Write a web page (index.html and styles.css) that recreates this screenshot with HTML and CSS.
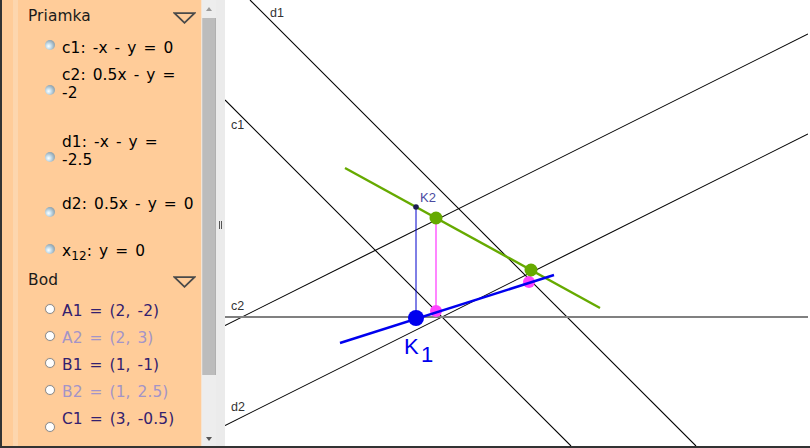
FILE: index.html
```html
<!DOCTYPE html>
<html>
<head>
<meta charset="utf-8">
<link rel="stylesheet" href="styles.css">
</head>
<body>
<div class="app">
  <div class="panel">
    <div class="header h-first"><span>Priamka</span><svg class="tri" width="23" height="12" viewBox="0 0 23 12"><path d="M1.5 1.2 H21.5 L11.5 10.8 Z" fill="none" stroke="#4a4a4a" stroke-width="1.8"/></svg></div>
    <div class="item g14"><span class="dot ln b-top1"></span><div class="txt">c1: -x - y = 0</div></div>
    <div class="item two g9"><span class="dot ln b-two"></span><div class="txt">c2: 0.5x - y =<br>-2</div></div>
    <div class="item two g31"><span class="dot ln b-two"></span><div class="txt">d1: -x - y =<br>-2.5</div></div>
    <div class="item g26"><span class="dot ln b-low"></span><div class="txt">d2: 0.5x - y = 0</div></div>
    <div class="item g29"><span class="dot ln"></span><div class="txt">x<sub>12</sub>: y = 0</div></div>
    <div class="header g11"><span>Bod</span><svg class="tri" width="23" height="12" viewBox="0 0 23 12"><path d="M1.5 1.2 H21.5 L11.5 10.8 Z" fill="none" stroke="#4a4a4a" stroke-width="1.8"/></svg></div>
    <div class="item g13 pt"><span class="dot pd"></span><div class="txt">A1 = (2, -2)</div></div>
    <div class="item g9 pt faded"><span class="dot pd"></span><div class="txt">A2 = (2, 3)</div></div>
    <div class="item g9 pt"><span class="dot pd"></span><div class="txt">B1 = (1, -1)</div></div>
    <div class="item g9 pt faded"><span class="dot pd"></span><div class="txt">B2 = (1, 2.5)</div></div>
    <div class="item g9 pt"><span class="dot pd b-low"></span><div class="txt">C1 = (3, -0.5)</div></div>
  </div>
  <div class="scrollbar">
    <span class="arrow up"></span>
    <div class="thumb"></div>
    <span class="arrow down"></span>
  </div>
  <div class="divider"><span class="grip"></span></div>
  <div class="graphics">
    <svg class="canvas" width="583" height="446" viewBox="225 0 583 446">
      <g stroke="#000" stroke-width="1.1" fill="none">
        <line x1="225" y1="100" x2="571" y2="446"/>
        <line x1="250" y1="0" x2="696" y2="446"/>
        <line x1="225" y1="325.5" x2="808" y2="34"/>
        <line x1="225" y1="425.5" x2="808" y2="134"/>
      </g>
      <line x1="225" y1="317" x2="808" y2="317" stroke="#808080" stroke-width="2"/>
      <line x1="345" y1="168" x2="600" y2="308" stroke="#66aa00" stroke-width="2.4"/>
      <circle cx="436" cy="311" r="6" fill="#ff44ff"/>
      <circle cx="529" cy="282" r="6" fill="#ff44ff"/>
      <line x1="436" y1="218" x2="436" y2="311" stroke="#ff44ff" stroke-width="1.3"/>
      <line x1="531" y1="270" x2="530" y2="282" stroke="#ff44ff" stroke-width="1.3"/>
      <line x1="340" y1="343" x2="554" y2="275" stroke="#0000ee" stroke-width="2.4"/>
      <line x1="416" y1="207" x2="416" y2="318" stroke="#0000cc" stroke-width="1"/>
      <circle cx="436" cy="218" r="6.5" fill="#66aa00"/>
      <circle cx="531" cy="270" r="6.5" fill="#66aa00"/>
      <circle cx="416" cy="318" r="8" fill="#0000ee"/>
      <circle cx="416" cy="207" r="2.8" fill="#1c1c50"/>
      <g class="lbl">
        <text x="270" y="17">d1</text>
        <text x="231" y="129">c1</text>
        <text x="231" y="310">c2</text>
        <text x="231" y="411">d2</text>
      </g>
      <text class="k2" x="420" y="202">K2</text>
      <text class="k1" x="404" y="354">K<tspan x="421" y="362">1</tspan></text>
    </svg>
  </div>
</div>
</body>
</html>
```
FILE: styles.css
```css
html, body {
  margin: 0;
  padding: 0;
  background: #fff;
}
.app {
  display: flex;
  width: 810px;
  height: 448px;
  box-sizing: border-box;
  border-left: 2px solid #333;
  border-bottom: 2px solid #333;
  overflow: hidden;
}
.panel {
  width: 199px;
  flex: none;
  border-right: 1px solid #f6e4d2;
  background: linear-gradient(to right, #ffcc99 0, #ffcc99 11px, #fdd6ae 11px, #fdd6ae 16px, #ffcc99 16px);
  font-family: "DejaVu Sans", Verdana, sans-serif;
  font-size: 15.4px;
  line-height: 18px;
  word-spacing: 2px;
  letter-spacing: 0.1px;
  color: #000;
}
.header {
  display: flex;
  justify-content: space-between;
  align-items: flex-start;
  height: 18px;
  padding: 0 5px 0 26px;
  font-size: 15.4px;
  color: #1a1a1a;
  word-spacing: 0;
}
.h-first {
  padding-top: 7px;
}
.header .tri {
  margin-top: 5px;
}
.item {
  display: flex;
  align-items: flex-start;
  height: 18px;
  padding-left: 43px;
}
.item.two {
  height: 36px;
}
.txt {
  white-space: nowrap;
}
.txt sub {
  font-size: 12px;
  line-height: 0;
  vertical-align: -4px;
  word-spacing: 0;
}
.dot {
  flex: none;
  width: 10px;
  height: 10px;
  margin-top: 2px;
  margin-right: 7px;
  border-radius: 50%;
  box-sizing: border-box;
}
.dot.ln {
  background: radial-gradient(circle at 36% 62%, #ffffff 0, #d2e8f4 22%, #a3b9c6 55%, #74838c 100%);
}
.dot.pd {
  background: #fff;
  border: 1px solid #8e8e8e;
  box-shadow: 0 0 1px #c8a888;
}
.b-top1 { margin-top: 1px; }
.b-two { margin-top: 19px; }
.b-low { margin-top: 12px; }
.pt { color: #33206e; }
.faded { color: #a394c8; }
.g9 { margin-top: 9px; }
.g11 { margin-top: 11px; }
.g13 { margin-top: 13px; }
.g14 { margin-top: 14px; }
.g26 { margin-top: 26px; }
.g29 { margin-top: 29px; }
.g31 { margin-top: 31px; }
.scrollbar {
  width: 14px;
  flex: none;
  position: relative;
  background: #ededed;
  display: flex;
  flex-direction: column;
  align-items: center;
}
.thumb {
  width: 14px;
  height: 357px;
  margin-top: 18px;
  background: #bcbcbc;
  box-sizing: border-box;
  border-left: 1px solid #c8c8c8;
  border-right: 1px solid #b0b0b0;
}
.arrow {
  position: absolute;
  left: 4px;
  width: 0;
  height: 0;
  border-left: 3px solid transparent;
  border-right: 3px solid transparent;
}
.arrow.up {
  top: 7px;
  border-bottom: 4px solid #9a9a9a;
}
.arrow.down {
  bottom: 5px;
  border-top: 4px solid #555;
}
.divider {
  width: 9px;
  flex: none;
  background: #ebebeb;
  display: flex;
  align-items: flex-start;
  justify-content: center;
}
.grip {
  margin-top: 221px;
  width: 3px;
  height: 8px;
  border-left: 1px solid #555;
  border-right: 1px solid #555;
  box-sizing: border-box;
}
.graphics {
  flex: 1;
  background: #fff;
}
.canvas {
  display: block;
}
.lbl text {
  font-family: "Liberation Sans", Arial, sans-serif;
  font-size: 12.5px;
  fill: #333;
}
.k2 {
  font-family: "Liberation Sans", Arial, sans-serif;
  font-size: 13px;
  fill: #4a4aa0;
}
.k1 {
  font-family: "Liberation Sans", Arial, sans-serif;
  font-size: 22px;
  fill: #0000ee;
}
```
